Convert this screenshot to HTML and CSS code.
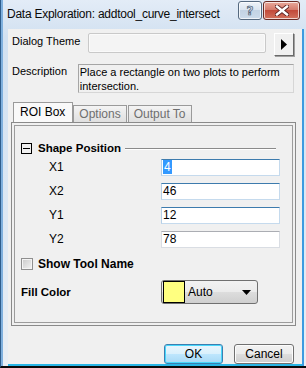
FILE: index.html
```html
<!DOCTYPE html>
<html lang="en">

<head>
    <meta charset="UTF-8">
    <title>Data Exploration: addtool_curve_intersect</title>
    <link rel="stylesheet" href="styles.css">
</head>

<body>
    <div class="window">
        <div class="titlebar">
            <span class="title">Data Exploration: addtool_curve_intersect</span>
            <div class="caption-buttons">
                <div class="cap-btn help">?</div>
                <div class="cap-btn close">
                    <svg width="14" height="11" viewBox="0 0 14 11">
                        <path d="M2 1.5 L12 9.5 M12 1.5 L2 9.5" stroke="#5a2020" stroke-width="4.2" stroke-linecap="square" />
                        <path d="M2 1.5 L12 9.5 M12 1.5 L2 9.5" stroke="#fff" stroke-width="2.4" stroke-linecap="square" />
                    </svg>
                </div>
            </div>
        </div>

        <div class="client">
            <div class="theme-row">
                <label class="row-label theme-label">Dialog Theme</label>
                <div class="theme-box"></div>
                <div class="arrow-btn">
                    <svg width="6" height="11" viewBox="0 0 6 11"><path d="M0 0 L6 5.5 L0 11 Z" fill="#000" /></svg>
                </div>
            </div>

            <div class="desc-row">
                <label class="row-label desc-label">Description</label>
                <div class="desc-box">Place a rectangle on two plots to perform intersection.</div>
            </div>

            <div class="tabs">
                <div class="tab active">ROI Box</div>
                <div class="tab">Options</div>
                <div class="tab">Output To</div>
            </div>
            <div class="panel">
                <div class="panel-inner">
                    <div class="group-head">
                        <span class="minus-box"></span>
                        <span class="bold">Shape Position</span>
                        <span class="group-line"></span>
                    </div>

                    <div class="fields">
                        <label class="field-label">X1</label>
                        <div class="field focus"><span class="selected">4</span></div>
                        <label class="field-label">X2</label>
                        <div class="field focus">46</div>
                        <label class="field-label">Y1</label>
                        <div class="field focus">12</div>
                        <label class="field-label">Y2</label>
                        <div class="field">78</div>
                    </div>

                    <div class="check-row">
                        <span class="checkbox"></span>
                        <span class="bold">Show Tool Name</span>
                    </div>

                    <div class="color-row">
                        <span class="bold color-label">Fill Color</span>
                        <div class="combo">
                            <span class="swatch"></span>
                            <span class="combo-text">Auto</span>
                            <svg class="combo-arrow" width="9" height="5" viewBox="0 0 9 5"><path d="M0 0 L9 0 L4.5 5 Z" fill="#000" /></svg>
                        </div>
                    </div>
                </div>
            </div>

            <div class="buttons">
                <div class="btn default">OK</div>
                <div class="btn">Cancel</div>
            </div>
        </div>
    </div>
</body>

</html>
```

FILE: styles.css
```css
body {
    margin: 0;
    padding: 0;
    background-color: #000;
    font-family: "Liberation Sans", Arial, sans-serif;
    font-size: 11px;
    color: #000;
}

.window {
    width: 306px;
    height: 368px;
    box-sizing: border-box;
    display: flex;
    flex-direction: column;
    background: linear-gradient(#e3ecf7, #d2e1f1 10%, #dde8f4 60%, #e9eef4);
    border-left: 1px solid #2f5d8c;
    box-shadow: inset 2px 0 0 #7fb0de;
    border-bottom: 2px solid #0a0a0a;
}

/* title bar */
.titlebar {
    height: 29px;
    display: flex;
    align-items: flex-start;
    padding: 0 6px 0 6px;
    flex-shrink: 0;
}

.title {
    font-family: "Liberation Sans", Arial, sans-serif;
    font-size: 12px;
    letter-spacing: -0.25px;
    margin-top: 7px;
    flex: 1;
    white-space: nowrap;
    color: #0a0a0a;
}

.caption-buttons {
    display: flex;
    gap: 1px;
    margin-top: 1px;
}

.cap-btn {
    height: 19px;
    box-sizing: border-box;
    border: 1px solid #55697f;
    border-radius: 3px;
    display: flex;
    align-items: center;
    justify-content: center;
    box-shadow: inset 0 0 0 1px rgba(255, 255, 255, 0.7);
}

.help {
    width: 24px;
    background: linear-gradient(#eef3f9, #dbe5f0 45%, #c3d3e4 50%, #ccdbeb);
    font-family: "DejaVu Sans", sans-serif;
    font-weight: bold;
    font-size: 12px;
    color: #c9d6e4;
    -webkit-text-stroke: 0.6px #3d5066;
}

.close {
    width: 37px;
    border-color: #6a2b25;
    background: linear-gradient(#e9a99b, #d57c6d 45%, #c24a3a 50%, #d2725d);
}

/* client area */
.client {
    flex: 1;
    background-color: #f0f0f0;
    margin: 0 4px 0 7px;
    padding: 4px 8px 0 4px;
    box-shadow: 2px 0 0 #3d9be0;
    border-bottom: 2px solid #29b6e6;
    display: flex;
    flex-direction: column;
}

.theme-row {
    display: flex;
    align-items: flex-start;
}

.row-label {
    white-space: nowrap;
}

.theme-label {
    width: 76px;
    margin-top: 2px;
}

.theme-box {
    width: 178px;
    height: 20px;
    box-sizing: border-box;
    border: 1px solid #c9c9c9;
    border-radius: 2px;
    background-color: #f4f4f4;
    box-shadow: inset 0 0 0 1px #fafafa;
}

.arrow-btn {
    width: 20px;
    height: 23px;
    box-sizing: border-box;
    margin-left: 8px;
    border-top: 1px solid #fff;
    border-left: 1px solid #fff;
    border-right: 1px solid #696969;
    border-bottom: 1px solid #696969;
    box-shadow: 1px 1px 0 #a0a0a0;
    background-color: #f0f0f0;
    display: flex;
    align-items: center;
    justify-content: center;
}

.desc-row {
    display: flex;
    align-items: flex-start;
    margin-top: 8px;
}

.desc-label {
    width: 66px;
    margin-top: 1px;
}

.desc-box {
    width: 217px;
    height: 29px;
    box-sizing: border-box;
    border: 1px solid #a5a5a5;
    border-right-color: #d6d6d6;
    border-bottom-color: #d6d6d6;
    padding: 0 0 0 1px;
    line-height: 14px;
}

/* tabs */
.tabs {
    display: flex;
    align-items: flex-end;
    margin: 9px 0 0 1px;
    height: 20px;
    position: relative;
    z-index: 1;
}

.tab {
    height: 17px;
    box-sizing: border-box;
    padding: 0 5px;
    border: 1px solid #9a9a9a;
    border-bottom: none;
    margin-right: 1px;
    color: #6f6f6f;
    font-size: 12px;
    line-height: 16px;
    background: linear-gradient(#f4f4f4, #e9e9e9 50%, #e0e0e0);
}

.tab.active {
    height: 20px;
    color: #000;
    background: #f9f9f9;
    padding: 0 7px 0 6px;
    margin-right: 0;
    line-height: 19px;
}

.panel {
    width: 285px;
    height: 204px;
    box-sizing: border-box;
    margin-left: -1px;
    border: 1px solid #8a8a8a;
    padding: 2px;
}

.panel-inner {
    height: 100%;
    box-sizing: border-box;
    border: 1px solid #9c9c9c;
    padding: 16px 0 0 6px;
}

.bold {
    font-weight: bold;
    font-size: 11.5px;
    white-space: nowrap;
}

.group-head {
    display: flex;
    align-items: center;
    height: 12px;
}

.minus-box {
    width: 11px;
    height: 11px;
    box-sizing: border-box;
    border: 1px solid #000;
    margin-right: 6px;
    background: linear-gradient(#000, #000) center / 7px 1px no-repeat;
}

.group-line {
    width: 151px;
    height: 1px;
    background-color: #8a8a8a;
    margin-left: 4px;
    box-shadow: 0 1px 0 #fff;
}

.fields {
    display: grid;
    grid-template-columns: 140px 119px;
    grid-auto-rows: 17px;
    row-gap: 7px;
    margin-top: 5px;
}

.field-label {
    padding-left: 28px;
    line-height: 17px;
    font-size: 12px;
}

.field {
    box-sizing: border-box;
    background-color: #fff;
    border: 1px solid #d9dde3;
    border-top-color: #abadb3;
    padding-left: 1px;
    line-height: 15px;
    font-size: 12px;
}

.field.focus {
    border-color: #c5daed;
    border-top-color: #3d7bad;
    border-left-color: #b5cfe7;
}

.selected {
    background-color: #3399ff;
    color: #fff;
    padding: 0 1px;
}

.check-row {
    display: flex;
    align-items: center;
    margin-top: 10px;
    height: 12px;
}

.checkbox {
    width: 12px;
    height: 12px;
    box-sizing: border-box;
    border: 1px solid #8f8f8f;
    background: linear-gradient(135deg, #c9c9c9, #f4f4f4);
    box-shadow: inset 0 0 0 1px #f4f4f4;
    margin-right: 5px;
}

.check-row .bold {
    font-size: 12px;
}

.color-row {
    display: flex;
    align-items: center;
    margin-top: 10px;
    height: 24px;
}

.color-label {
    width: 140px;
}

.combo {
    width: 97px;
    height: 24px;
    box-sizing: border-box;
    border: 1px solid #707070;
    border-radius: 3px;
    background: linear-gradient(#f2f2f2, #ebebeb 50%, #dddddd 50%, #cfcfcf);
    display: flex;
    align-items: center;
    padding: 0 6px 0 1px;
}

.swatch {
    width: 22px;
    height: 22px;
    box-sizing: border-box;
    border: 1px solid #000;
    background-color: #ffff80;
}

.combo-text {
    flex: 1;
    margin-left: 3px;
    font-size: 12px;
}

/* dialog buttons */
.buttons {
    display: flex;
    justify-content: flex-end;
    gap: 11px;
    margin-top: auto;
    margin-bottom: 0px;
}

.btn {
    width: 60px;
    height: 20px;
    box-sizing: border-box;
    border: 1px solid #707070;
    border-radius: 3px;
    background: linear-gradient(#f2f2f2, #ebebeb 50%, #dddddd 50%, #cfcfcf);
    box-shadow: inset 0 0 0 1px #fcfcfc;
    text-align: center;
    line-height: 18px;
    font-size: 12px;
}

.btn.default {
    width: 59px;
    border-color: #3c7fb1;
    background: linear-gradient(#eaf6fd, #d9f0fc 50%, #bee6fd 50%, #a7d9f5);
    box-shadow: inset 0 0 0 1px #48d7fb;
}
```
